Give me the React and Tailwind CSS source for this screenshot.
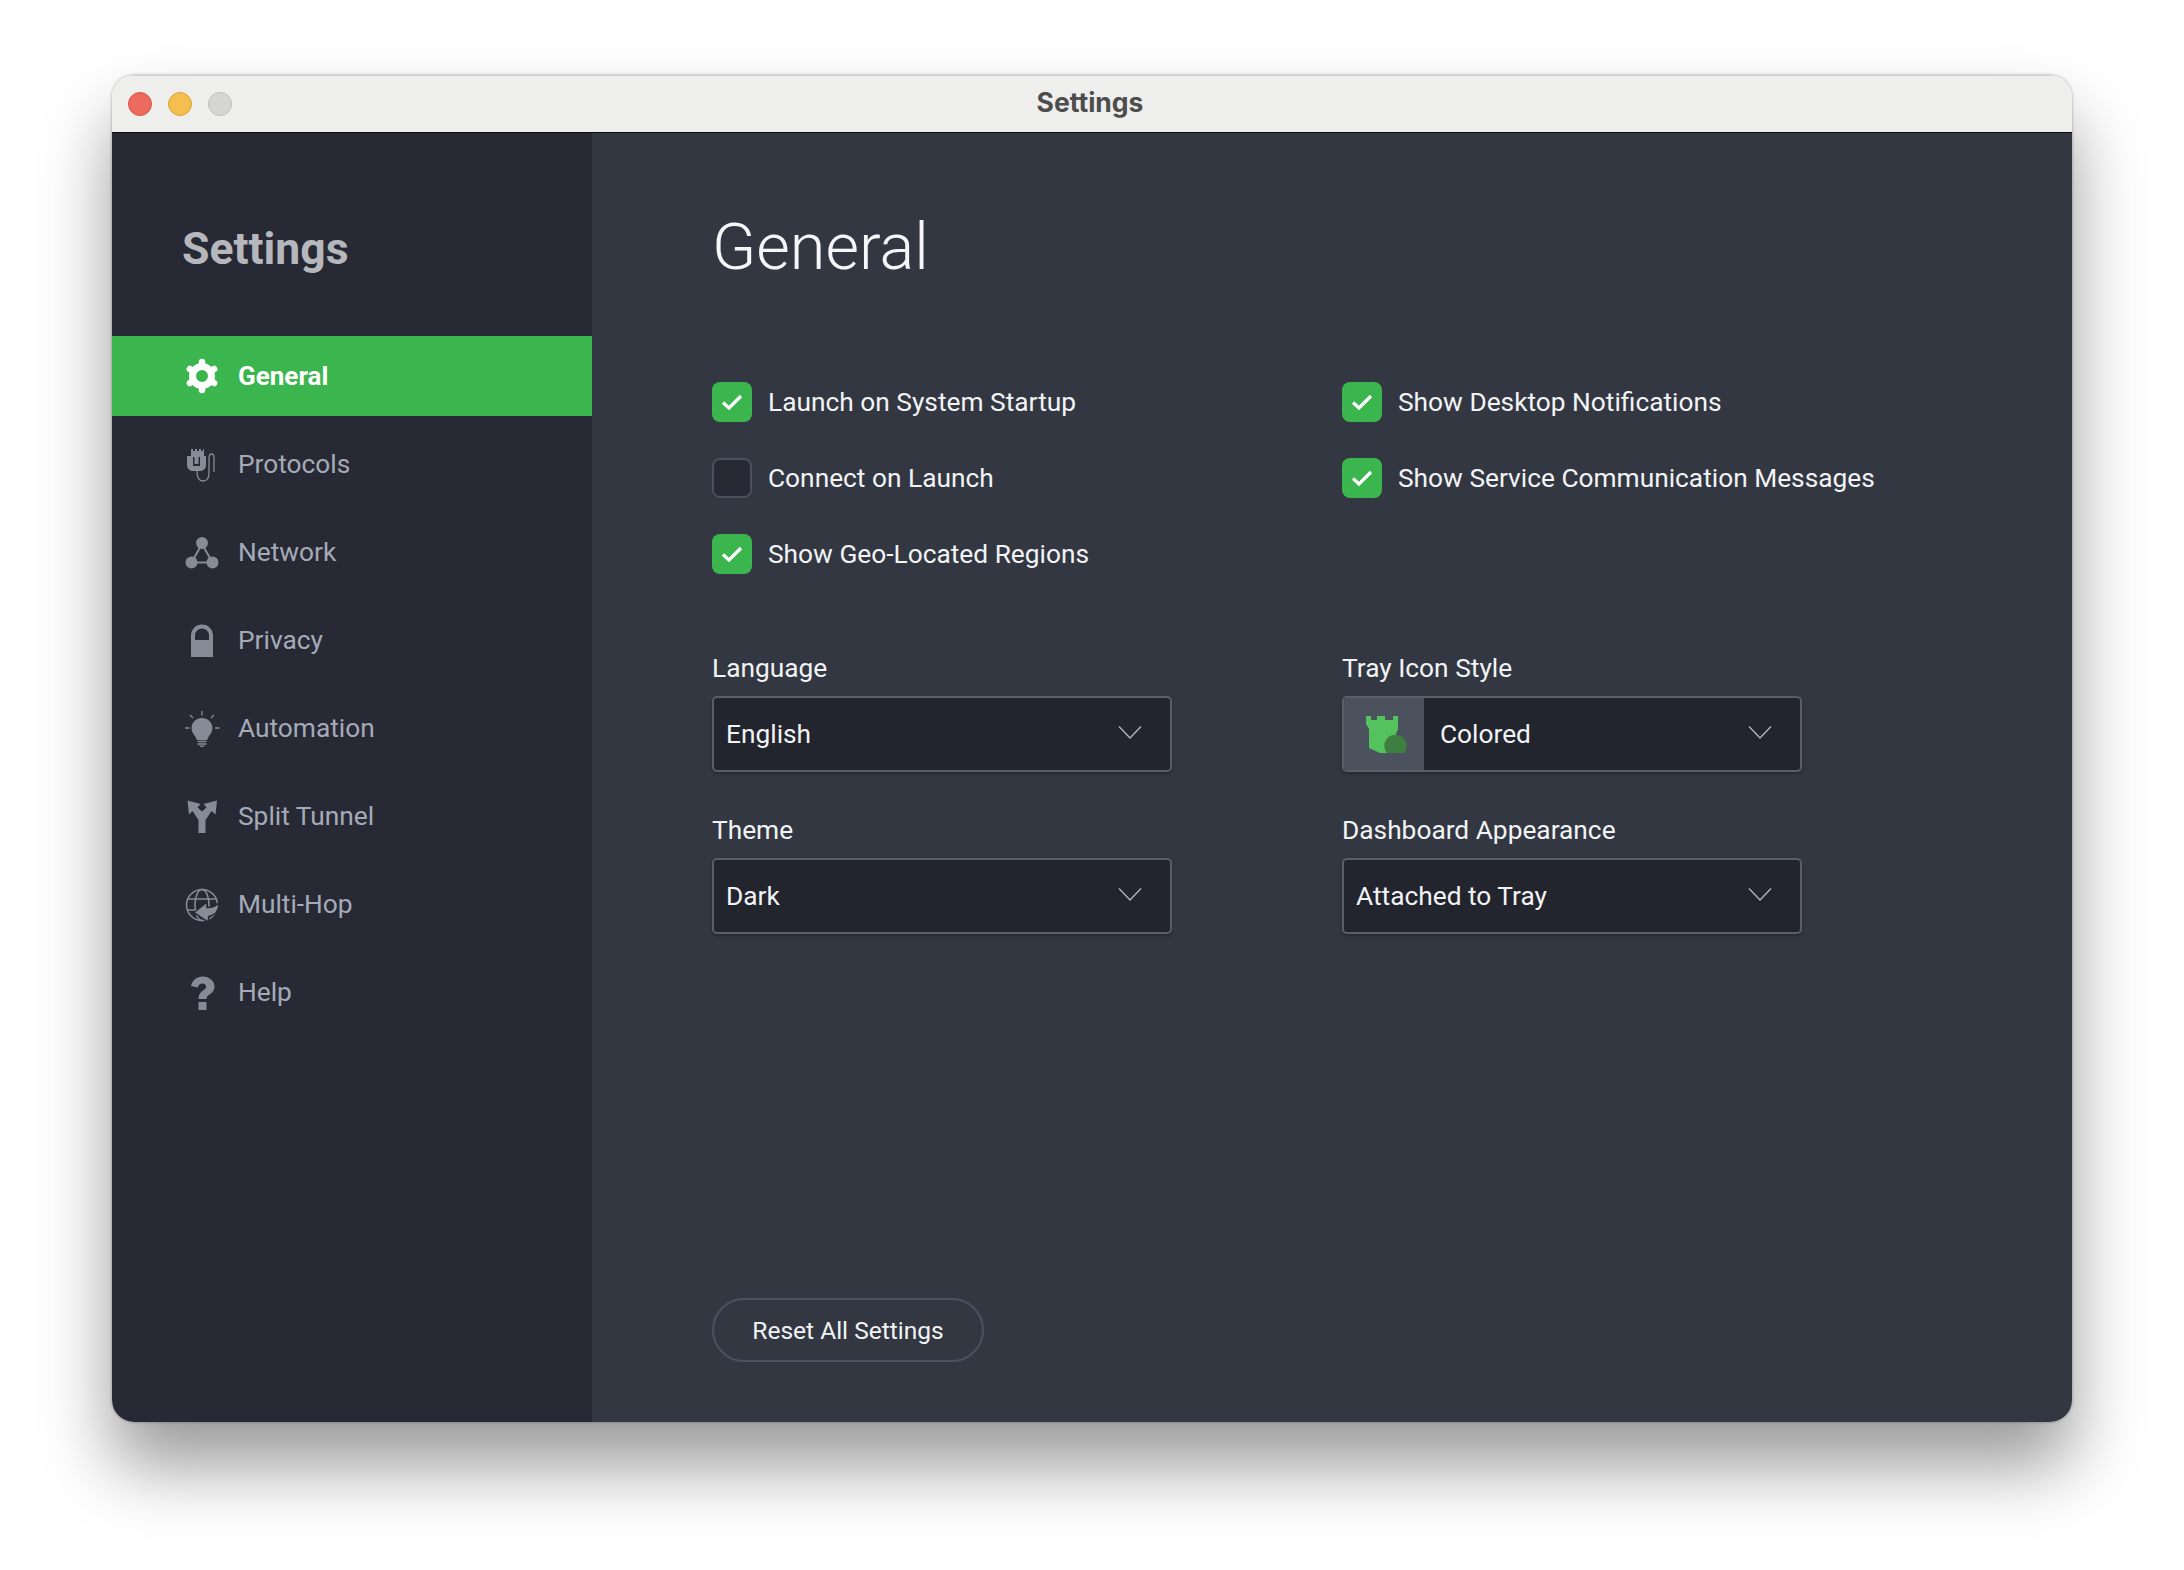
import React from "react";

const roboto = "font-['Roboto',sans-serif]";

function GearIcon() {
  const lobes = [-90, -30, 30, 90, 150, 210];
  return (
    <svg width="36" height="36" viewBox="0 0 36 36" fill="none" stroke="#fff">
      <circle cx="18" cy="18" r="9.5" strokeWidth="7" />
      {lobes.map((a) => {
        const r = (a * Math.PI) / 180;
        return (
          <line
            key={a}
            x1={18 + 11 * Math.cos(r)}
            y1={18 + 11 * Math.sin(r)}
            x2={18 + 14 * Math.cos(r)}
            y2={18 + 14 * Math.sin(r)}
            strokeWidth="6.5"
            strokeLinecap="round"
          />
        );
      })}
    </svg>
  );
}

function ProtocolsIcon() {
  return (
    <svg width="36" height="36" viewBox="0 0 36 36" fill="#868c97">
      <path d="M7 2h2v2h2V2h2v2h2V2h2v2h2V2h1v7H7z" />
      <path fillRule="evenodd" d="M3 9h19v9q0 5-5 6H8q-5-1-5-6zM9 10v9h7v-9h-1.500v7h-4v-7z" />
      <path d="M13 24q0 10 6 10q6 0 6-8V11q0-4 2.500-4T30 11v14" fill="none" stroke="#868c97" strokeWidth="1.300" />
    </svg>
  );
}

function NetworkIcon() {
  return (
    <svg width="36" height="36" viewBox="0 0 36 36" fill="#868c97" stroke="#868c97">
      <path d="M18 9 7.500 27.500h21z" fill="none" strokeWidth="2" />
      <circle cx="18" cy="8" r="6" stroke="none" />
      <circle cx="7.500" cy="27.500" r="6" stroke="none" />
      <circle cx="28.500" cy="27.500" r="6" stroke="none" />
    </svg>
  );
}

function LockIcon() {
  return (
    <svg width="36" height="36" viewBox="0 0 36 36" fill="#868c97">
      <path d="M9 18v-5.500a9 9 0 0 1 18 0v5.500" fill="none" stroke="#868c97" strokeWidth="4" />
      <rect x="7" y="17" width="22" height="17" />
    </svg>
  );
}

function BulbIcon() {
  return (
    <svg width="36" height="36" viewBox="0 0 36 36" fill="#868c97" stroke="#868c97">
      <path d="M18 0v4.500M6 4l3 3M30 4l-3 3M1 17h4.500M31 17h4.500" fill="none" strokeWidth="1.300" />
      <path stroke="none" d="M18 7c-6 0-10.500 4.500-10.500 10.500 0 3.500 2.500 6 4 8.500 .7 1.200 1 2 1.200 3h10.600c.2-1 .5-1.800 1.200-3 1.500-2.500 4-5 4-8.500C28.500 11.500 24 7 18 7z" />
      <path d="M13.500 30.500h9M13.500 33h9" fill="none" strokeWidth="1.300" />
      <path stroke="none" d="M15 34.500h6L18 37z" />
    </svg>
  );
}

function SplitIcon() {
  return (
    <svg width="36" height="36" viewBox="0 0 36 36" fill="#868c97">
      <path d="M3.500 1.500 16.500 5 13.500 8.500 18 12.500 22.500 8.500 19.500 5 33 1.500 31.500 15.500 27.500 12 21.500 21V34H14.500V21L8.500 12 5 15.500Z" />
    </svg>
  );
}

function GlobeIcon() {
  return (
    <svg width="36" height="36" viewBox="0 0 36 36" fill="none" stroke="#868c97" strokeWidth="1.600">
      <circle cx="18" cy="18" r="15.500" />
      <ellipse cx="18" cy="18" rx="7" ry="15.500" />
      <path d="M3.500 12h29M3 23h29" />
      <path fill="#868c97" stroke="#272935" strokeWidth="1.500" d="M10 25.500 23 15v5.500c5 0 9-1 12-5 0 8-4 13-10 14l-1 5.500z" />
    </svg>
  );
}

function HelpIcon() {
  return (
    <svg width="36" height="36" viewBox="0 0 36 36" fill="#868c97">
      <path d="M7 11C8.500 5 13 1.500 18.500 1.500 25.500 1.500 30.500 6 30.500 11.500c0 4-2 6-5 8-2 1.400-3 2.500-3 4.500h-8c0-4 1.500-6.500 4.500-8.500 2-1.300 3-2.300 3-4 0-1.800-1.400-3-3.500-3-2.300 0-3.800 1.300-4.800 4z" />
      <rect x="14.500" y="27" width="8" height="8" />
    </svg>
  );
}

const navItems = [
  ["Protocols", ProtocolsIcon],
  ["Network", NetworkIcon],
  ["Privacy", LockIcon],
  ["Automation", BulbIcon],
  ["Split Tunnel", SplitIcon],
  ["Multi-Hop", GlobeIcon],
  ["Help", HelpIcon],
];

function Checkbox({ checked, label }) {
  return (
    <div className="flex items-center gap-4 h-10">
      {checked ? (
        <div className="w-10 h-10 rounded-lg bg-[#3bb54d] flex items-center justify-center">
          <svg width="22" height="18" viewBox="0 0 22 18" fill="none" stroke="#fff" strokeWidth="3.200">
            <path d="M2 9.500 8 15 20 3" />
          </svg>
        </div>
      ) : (
        <div className="w-10 h-10 rounded-lg bg-[#272935] border-2 border-[#4c4d5f]" />
      )}
      <span className="text-[26.300px] text-[#f2f3f5] leading-none">{label}</span>
    </div>
  );
}

function Chevron() {
  return (
    <svg width="24" height="15" viewBox="0 0 24 15" fill="none" stroke="#b4b6bc" strokeWidth="1.300">
      <path d="M1 1.500 12 13 23 1.500" />
    </svg>
  );
}

function Select({ label, value, icon }) {
  return (
    <div className="flex flex-col w-[460px]">
      <div className="text-[26.300px] leading-none text-[#f2f3f5] mb-[13px] h-[30px] flex items-center">{label}</div>
      <div className="h-[76px] rounded-[5px] border-2 border-[#5b5e69] bg-[#22242e] flex items-center overflow-hidden shadow-[0_2px_3px_rgba(0,0,0,0.25)]">
        {icon && (
          <div className="w-[80px] h-full bg-[#4c515e] flex items-center justify-center shrink-0 pl-[6px]">
            <svg width="42" height="37" viewBox="0 0 42 37">
              <path fill="#55c35d" d="M0 0h5v4h6V0h8v4h8V0h5v13l-2 5v19H14L3 32V13L0 8z" />
              <circle cx="29.500" cy="30" r="11.200" fill="#3c7f41" />
            </svg>
          </div>
        )}
        <span className={`text-[26.300px] text-[#f2f3f5] leading-none flex-1 ${icon ? "pl-[16px]" : "pl-3"}`}>{value}</span>
        <div className="pr-7 flex mb-[3px]">
          <Chevron />
        </div>
      </div>
    </div>
  );
}

export default function App() {
  return (
    <div className={`w-[2184px] h-[1570px] bg-white pl-[112px] pt-[75px] ${roboto}`}>
      <div className="w-[1960px] h-[1347px] rounded-[22px] overflow-hidden flex flex-col shadow-[0_44px_70px_rgba(0,0,0,0.4),0_0_3px_rgba(0,0,0,0.35)]">
        <div className="relative h-[58px] shrink-0 bg-[#eeeeed] border-b border-b-[#0c0c10] border-t border-t-[#cfcfcf] flex items-center pl-4 gap-4">
          <div className="w-6 h-6 rounded-full bg-[#ec6a5e] border border-[#d4574c]" />
          <div className="w-6 h-6 rounded-full bg-[#f5bf4f] border border-[#d9a53c]" />
          <div className="w-6 h-6 rounded-full bg-[#d5d5d4] border border-[#bdbdbd]" />
          <div className="absolute inset-0 flex items-center justify-center font-['Inter',sans-serif] font-bold text-[26.500px] text-[#4d4d4d] pr-[4px] pb-[2px]">
            Settings
          </div>
        </div>
        <div className="flex flex-1 min-h-0">
          <aside className="w-[480px] shrink-0 bg-[#272935] pt-[203px]">
            <div className="absolute top-[227px] left-[182px] text-[44.500px] leading-[44px] font-bold text-[#b5b7bd]">Settings</div>
            <div className="h-20 bg-[#3bb54d] flex items-center pl-[72px] gap-[18px] text-white font-bold text-[26px] mb-[9px]">
              <GearIcon />
              <span>General</span>
            </div>
            {navItems.map(([name, Icon]) => (
              <div key={name} className="h-20 mb-2 flex items-center pl-[72px] gap-[18px] text-[26.300px] text-[#a4abb7]">
                <Icon />
                <span>{name}</span>
              </div>
            ))}
          </aside>
          <main className="flex-1 bg-[#333742] pl-[120px] flex flex-col">
            <h1 className="text-[64.800px] font-light text-[#f5f6f8] leading-none mt-[82px] h-[64px]">General</h1>
            <div className="flex mt-[103px]">
              <div className="w-[630px] flex flex-col gap-9">
                <Checkbox checked label="Launch on System Startup" />
                <Checkbox label="Connect on Launch" />
                <Checkbox checked label="Show Geo-Located Regions" />
              </div>
              <div className="flex flex-col gap-9">
                <Checkbox checked label="Show Desktop Notifications" />
                <Checkbox checked label="Show Service Communication Messages" />
              </div>
            </div>
            <div className="grid grid-cols-[630px_460px] gap-y-[43px] mt-[79px]">
              <Select label="Language" value="English" />
              <Select label="Tray Icon Style" value="Colored" icon />
              <Select label="Theme" value="Dark" />
              <Select label="Dashboard Appearance" value="Attached to Tray" />
            </div>
            <button className="mt-auto mb-[60px] w-[272px] h-[64px] rounded-[32px] border-2 border-[#4f4f63] text-[#f2f3f5] text-[24.500px] pt-[2px] flex items-center justify-center">
              Reset All Settings
            </button>
          </main>
        </div>
      </div>
    </div>
  );
}
